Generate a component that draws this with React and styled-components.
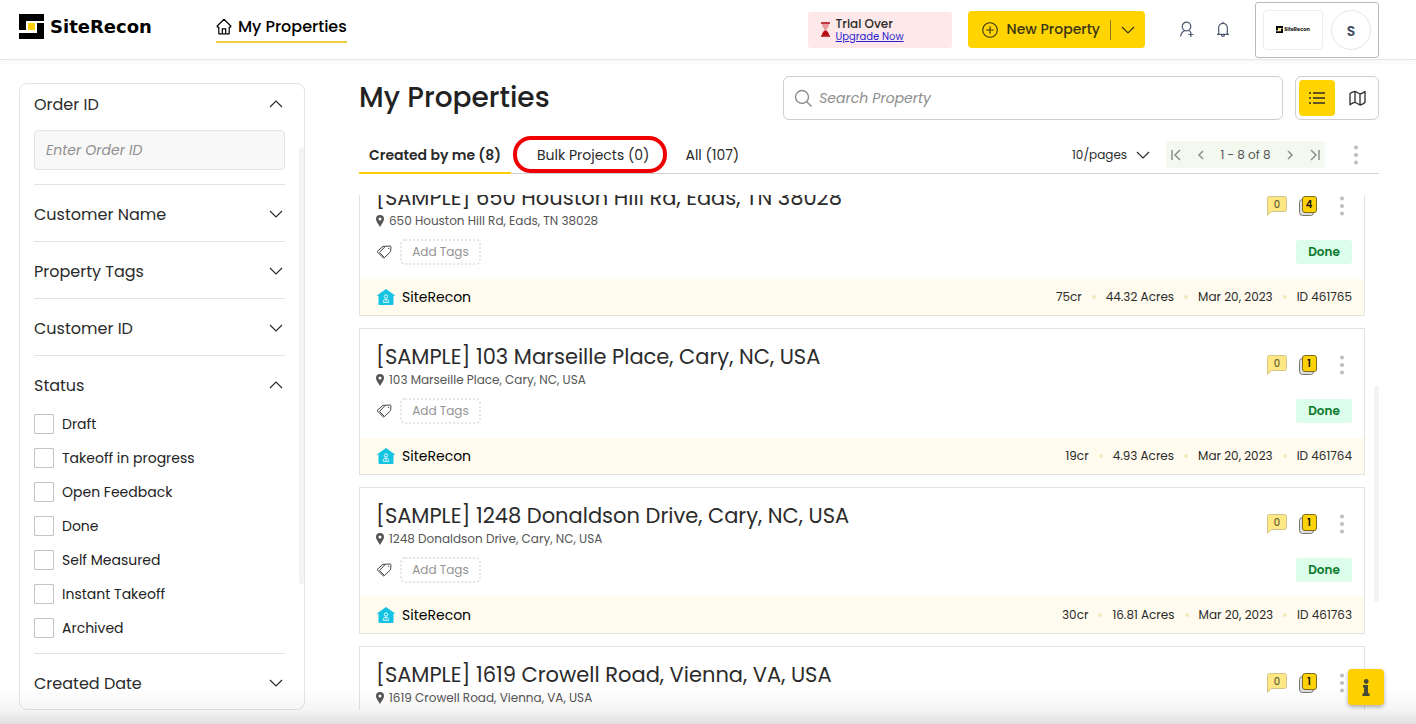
import { useState } from "react";
import styled, { createGlobalStyle } from "styled-components";

const GlobalStyle = createGlobalStyle`
  * {
    box-sizing: border-box;
  }

  body {
    margin: 0;
    background: #fff;
    color: #2b2b2b;
    font-family: Poppins, Inter, "Open Sans", sans-serif;
    font-size: 14px;
  }

  button, input, select {
    font-family: inherit;
    color: inherit;
  }

  button {
    border: none;
    padding: 0;
    background: none;
    cursor: pointer;
  }

  svg {
    display: block;
    flex-shrink: 0;
  }
`;

const Page = styled.div`
  display: flex;
  flex-direction: column;
  height: 100vh;
  overflow: hidden;
`;

/* header */

const Header = styled.header`
  display: flex;
  align-items: center;
  height: 60px;
  flex-shrink: 0;
  padding: 0 37px 0 19px;
  border-bottom: 1px solid #e6e6e6;
  box-shadow: 0 2px 6px rgba(0, 0, 0, 0.04);
`;

const Brand = styled.a`
  display: flex;
  align-items: center;
  gap: 6px;
  margin-bottom: 6px;
  color: #000;
  text-decoration: none;
  font-family: "DejaVu Sans", sans-serif;
  font-weight: 700;
  font-size: 18px;
`;

const NavLink = styled.a`
  display: flex;
  align-items: center;
  gap: 6px;
  height: 30px;
  margin: 0 0 4px 64px;
  border-bottom: 2px solid #edd03c;
  color: #000;
  text-decoration: none;
  font-weight: 500;
  font-size: 16px;
`;

const HeaderRight = styled.div`
  display: flex;
  align-items: center;
  margin-left: auto;
`;

const TrialBox = styled.div`
  display: flex;
  align-items: center;
  gap: 5px;
  width: 144px;
  height: 36px;
  padding-left: 12px;
  border-radius: 3px;
  background: #ffe8e9;
`;

const TrialText = styled.div`
  display: flex;
  flex-direction: column;
  font-size: 12px;
  font-weight: 500;
  line-height: 14px;

  a {
    color: #2a1fd0;
    font-size: 10px;
    font-weight: 400;
    line-height: 12px;
  }
`;

const NewButtonGroup = styled.div`
  display: flex;
  align-items: center;
  height: 37px;
  margin: 0 33px 0 16px;
  border-radius: 4px;
  background: #ffd400;
  color: #3b3413;
`;

const NewButton = styled.button`
  display: flex;
  align-items: center;
  gap: 9px;
  height: 20px;
  padding: 0 10px 0 14px;
  border-right: 1px solid #8d7714;
  font-size: 14px;
  font-weight: 500;
`;

const NewMenuButton = styled.button`
  display: flex;
  align-items: center;
  justify-content: center;
  width: 34px;
  height: 37px;
`;

const HeaderIcon = styled.button`
  display: flex;
  align-items: center;
  justify-content: center;
  width: 18px;
  height: 20px;
  margin-right: 18px;
  color: #4a5670;
`;

const Account = styled.button`
  display: flex;
  align-items: center;
  gap: 8px;
  height: 56px;
  margin-left: 5px;
  padding: 0 7px;
  border: 1px solid #b9b9b9;
  border-radius: 3px;
`;

const CompanyLogo = styled.span`
  display: flex;
  align-items: center;
  justify-content: center;
  gap: 1px;
  width: 60px;
  height: 40px;
  border: 1px solid #ececec;
  border-radius: 4px;
  font-size: 5px;
  font-weight: 700;
  color: #222;
`;

const Avatar = styled.span`
  display: flex;
  align-items: center;
  justify-content: center;
  width: 40px;
  height: 40px;
  padding-top: 4px;
  border: 1px solid #e6e6e6;
  border-radius: 50%;
  color: #3d4a5e;
  font-size: 14px;
  font-weight: 600;
`;

/* body */

const Main = styled.main`
  display: flex;
  gap: 54px;
  flex: 1;
  min-height: 0;
  padding: 16px 37px 14px 19px;
`;

const Sidebar = styled.aside`
  position: relative;
  width: 286px;
  flex-shrink: 0;
  margin-top: 7px;
  padding: 0 19px 0 14px;
  border: 1px solid #e4e4e4;
  border-radius: 8px;
  overflow: hidden;
`;

const ScrollThumb = styled.span`
  position: absolute;
  top: ${(props) => props.$top};
  right: 0;
  width: 5px;
  height: ${(props) => props.$size};
  border-radius: 3px;
  background: #f3f3f3;
`;

const FilterSection = styled.section`
  padding: 9px 0 7px;
  border-bottom: 1px solid #e2e2e2;

  &:first-child {
    padding-top: 0;
  }

  &:last-of-type {
    border-bottom: none;
  }
`;

const FilterHeader = styled.button`
  display: flex;
  align-items: center;
  justify-content: space-between;
  width: 100%;
  height: 40px;
  padding-right: 2px;
  font-size: 16px;
`;

const OrderInput = styled.input`
  display: block;
  width: 100%;
  height: 40px;
  margin: 6px 0 7px;
  padding: 0 11px;
  border: 1px solid #e2e2e2;
  border-radius: 4px;
  background: #f8f8f8;
  font-size: 14px;
  font-style: italic;

  &::placeholder {
    color: #909090;
  }
`;

const CheckList = styled.div`
  padding: 2px 0 1px;
`;

const CheckRow = styled.label`
  display: flex;
  align-items: center;
  gap: 8px;
  height: 34px;
  color: #222;
  font-size: 14px;

  input {
    appearance: none;
    width: 20px;
    height: 20px;
    margin: 0;
    border: 1px solid #c4c4c4;
    border-radius: 1px;
    background: #fff;
  }

  input:checked {
    background: #ffd400;
  }
`;

const Content = styled.div`
  display: flex;
  flex-direction: column;
  flex: 1;
  min-width: 0;
`;

const TitleRow = styled.div`
  display: flex;
  align-items: center;
  gap: 12px;
  height: 44px;
`;

const PageTitle = styled.h1`
  flex: 1;
  margin: 0;
  color: #222;
  font-size: 28px;
  font-weight: 500;
  line-height: 36px;
`;

const SearchBox = styled.label`
  display: flex;
  align-items: center;
  gap: 6px;
  width: 49%;
  height: 44px;
  padding: 0 10px;
  border: 1px solid #cfcfcf;
  border-radius: 6px;
  color: #8d8d8d;

  input {
    flex: 1;
    border: none;
    outline: none;
    padding: 0;
    background: none;
    font-size: 14px;
    font-style: italic;
  }

  input::placeholder {
    color: #8d8d8d;
  }
`;

const ViewToggle = styled.div`
  display: flex;
  align-items: center;
  gap: 4px;
  height: 44px;
  padding: 0 3px;
  border: 1px solid #cfcfcf;
  border-radius: 6px;
`;

const ViewButton = styled.button`
  display: flex;
  align-items: center;
  justify-content: center;
  width: 36px;
  height: 36px;
  border-radius: 4px;
  background: ${(props) => (props.$active ? "#ffd400" : "transparent")};
`;

const TabRow = styled.div`
  display: flex;
  align-items: center;
  height: 38px;
  flex-shrink: 0;
  margin-top: 16px;
  border-bottom: 1px solid #d2d2d2;
`;

const Tab = styled.button`
  position: relative;
  height: 38px;
  margin-right: 16px;
  padding: 4px 10px 0;
  border-bottom: 2px solid ${(props) => (props.$active ? "#ffc907" : "transparent")};
  font-size: 14px;
  font-weight: ${(props) => (props.$active ? 600 : 400)};
  white-space: nowrap;
`;

const Highlight = styled.span`
  position: absolute;
  inset: 0 -8px -1px -14px;
  border: 4px solid #f00000;
  border-radius: 18px;
`;

const TabTools = styled.div`
  display: flex;
  align-items: center;
  margin-left: auto;
  padding-right: 13px;
`;

const PageSize = styled.label`
  display: flex;
  align-items: center;
  gap: 8px;
  margin-right: 16px;

  select {
    appearance: none;
    border: none;
    padding: 0;
    background: none;
    font-size: 12px;
  }
`;

const Pager = styled.div`
  display: flex;
  align-items: center;
  justify-content: space-between;
  width: 159px;
  height: 27px;
  margin-right: 21px;
  padding: 0 4px;
  border-radius: 3px;
  background: #f3f9ef;
  color: #555;
  font-size: 12px;

  button {
    color: #8d8d8d;
  }
`;

const MenuButton = styled.button`
  display: flex;
  align-items: center;
  justify-content: center;
  width: 20px;
  height: 24px;
  color: #bdbdbd;
`;

const ListArea = styled.div`
  position: relative;
  flex: 1;
  min-height: 0;
  margin-top: 21px;
  padding-right: 14px;
  overflow: hidden;
`;

const CardList = styled.div`
  display: flex;
  flex-direction: column;
  gap: 12px;
  margin-top: -26px;
`;

const Card = styled.article`
  border: 1px solid #e3e3e3;
`;

const CardBody = styled.div`
  display: flex;
  flex-direction: column;
  gap: 10px;
  padding: 13px 12px 14px 16px;
`;

const CardRow = styled.div`
  display: flex;
  align-items: center;
  justify-content: space-between;
`;

const CardTitle = styled.h2`
  margin: 0;
  font-size: 21px;
  font-weight: 400;
  line-height: 30px;
`;

const Address = styled.div`
  display: flex;
  align-items: center;
  gap: 5px;
  color: #555;
  font-size: 12px;
  line-height: 16px;
`;

const Actions = styled.div`
  display: flex;
  align-items: center;
  gap: 12px;

  ${MenuButton} {
    margin-left: 3px;
  }
`;

const CountButton = styled.button`
  position: relative;
  height: 20px;
`;

const Count = styled.span`
  position: absolute;
  top: 0;
  right: 0;
  width: ${(props) => (props.$strong ? "16px" : "20px")};
  color: ${(props) => (props.$strong ? "#111" : "#6d6536")};
  font-size: 10px;
  font-weight: ${(props) => (props.$strong ? 600 : 500)};
  line-height: 17px;
  text-align: center;
`;

const Tags = styled.div`
  display: flex;
  align-items: center;
  gap: 8px;
`;

const AddTags = styled.button`
  width: 81px;
  height: 26px;
  border: 2px dotted #e4e4e4;
  border-radius: 5px;
  color: #929292;
  font-size: 12px;
`;

const StatusBadge = styled.span`
  width: 56px;
  border-radius: 3px;
  background: #dcfde9;
  color: #087a2c;
  font-size: 12px;
  font-weight: 600;
  line-height: 24px;
  text-align: center;
`;

const CardFooter = styled.footer`
  display: flex;
  align-items: center;
  justify-content: space-between;
  height: 36px;
  padding: 0 12px 0 16px;
  background: #fffbee;
`;

const Owner = styled.div`
  display: flex;
  align-items: center;
  gap: 6px;
  color: #000;
  font-size: 14px;
`;

const Meta = styled.div`
  display: flex;
  align-items: center;
  gap: 10px;
  font-size: 12px;
`;

const Dot = styled.span`
  width: 4px;
  height: 4px;
  border-radius: 50%;
  background: #f0eabc;
`;

const BottomFade = styled.div`
  position: fixed;
  left: 0;
  right: 0;
  bottom: 0;
  height: 36px;
  background: linear-gradient(rgba(0, 0, 0, 0), rgba(0, 0, 0, 0.04) 60%, rgba(0, 0, 0, 0.12));
  pointer-events: none;
`;

const InfoButton = styled.button`
  position: fixed;
  right: 32px;
  bottom: 19px;
  display: flex;
  align-items: center;
  justify-content: center;
  width: 36px;
  height: 36px;
  border-radius: 4px;
  background: #ffd000;
  box-shadow: 0 2px 4px rgba(0, 0, 0, 0.3);
`;

/* icons */

const Chevron = ({ up, size = 14 }) => (
  <svg width={size} height={size} viewBox="0 0 14 14" fill="none" stroke="currentColor" strokeWidth="1.2">
    <path d={up ? "M1 10l6-6 6 6" : "M1 4l6 6 6-6"} />
  </svg>
);

const LogoMark = ({ size }) => (
  <svg width={size} height={size} viewBox="0 0 25 25">
    <path d="M0 0h25v7H7v9H0z" fill="#000" />
    <path d="M25 25H0v-6h18V9h7z" fill="#000" />
    <path d="M9 9h7v7H9z" fill="#ffcf0b" />
  </svg>
);

const HouseIcon = () => (
  <svg width="16" height="17" viewBox="0 0 16 17" fill="none" stroke="currentColor" strokeWidth="1.2">
    <path d="M1 8.2L8 1.3l7 6.9-.7.9h-1.1v6.7H2.8V9.1H1.700z" strokeLinejoin="round" />
    <path d="M6.300 15.600v-4.800h3.400v4.800" />
  </svg>
);

const HourglassIcon = () => (
  <svg width="11" height="15" viewBox="0 0 11 15">
    <path d="M2 1.5h7c0 3-1.2 4.4-2.7 6C7.800 9 9 10.500 9 13.500H2c0-3 1.200-4.500 2.700-6C3.200 6 2 4.500 2 1.500z" fill="#e99a9c" />
    <path d="M5.500 8.500C7.500 9.500 9 11 9 13.500H2c0-2.500 1.500-4 3.500-5z" fill="#b40610" />
    <path d="M1 1h9M1 14h9" stroke="#b40610" strokeWidth="1.500" />
  </svg>
);

const PlusCircleIcon = () => (
  <svg width="16" height="16" viewBox="0 0 16 16" fill="none" stroke="currentColor" strokeWidth="1.100">
    <circle cx="8" cy="8" r="7.300" />
    <path d="M8 4.200v7.600M4.200 8h7.600" />
  </svg>
);

const UserPlusIcon = () => (
  <svg width="16" height="17" viewBox="0 0 16 17" fill="none" stroke="currentColor" strokeWidth="1.200">
    <circle cx="7.500" cy="5.500" r="4.300" />
    <path d="M1.700 15.500c.3-3.300 1.800-5 4-5.900M9.700 9.500c.8.400 1.400.9 1.900 1.600M11.800 11v5M9.300 13.500h5" />
  </svg>
);

const BellIcon = () => (
  <svg width="14" height="17" viewBox="0 0 14 17" fill="none" stroke="currentColor" strokeWidth="1.200">
    <path d="M1 13.300h12M2.700 13V6.700a4.300 4.300 0 0 1 8.600 0V13M5.500 13.500c0 2.600 3 2.600 3 0M7 .7v1.700" />
  </svg>
);

const SearchIcon = () => (
  <svg width="19" height="19" viewBox="0 0 19 19" fill="none" stroke="currentColor" strokeWidth="1.400">
    <circle cx="8" cy="8" r="6.500" />
    <path d="M12.700 12.700l4.800 4.800" />
  </svg>
);

const ListIcon = () => (
  <svg width="16" height="14" viewBox="0 0 16 14" stroke="#2b2b2b" strokeWidth="1.500">
    <path d="M0 2h2M0 7h2M0 12h2M4 2h12M4 7h12M4 12h12" />
  </svg>
);

const MapIcon = () => (
  <svg width="17" height="16" viewBox="0 0 17 16" fill="none" stroke="#2b2b2b" strokeWidth="1.300" strokeLinejoin="round">
    <path d="M1 3.500c1.700-1.300 3.300-2 5-2.200l5 2.700c1.700-.2 3.300-1 5-2.500v11c-1.700 1.500-3.300 2.300-5 2.500l-5-2.700c-1.700.2-3.300 1-5 2.500zM6 1.300v11M11 4v11" />
  </svg>
);

const PagerIcon = ({ d }) => (
  <svg width="12" height="12" viewBox="0 0 12 12" fill="none" stroke="currentColor" strokeWidth="1.500">
    <path d={d} />
  </svg>
);

const DotsIcon = () => (
  <svg width="4" height="20" viewBox="0 0 4 20" fill="currentColor">
    <circle cx="2" cy="2.500" r="2" />
    <circle cx="2" cy="10" r="2" />
    <circle cx="2" cy="17.500" r="2" />
  </svg>
);

const PinIcon = () => (
  <svg width="8" height="12" viewBox="0 0 8 12">
    <path fillRule="evenodd" fill="#555" d="M4 0a4 4 0 0 1 4 4c0 2.200-1.500 3.700-4 8C1.500 7.700 0 6.200 0 4a4 4 0 0 1 4-4zm0 2.500a1.500 1.500 0 1 0 0 3 1.500 1.500 0 0 0 0-3z" />
  </svg>
);

const TagIcon = () => (
  <svg width="16" height="14" viewBox="0 0 16 14" fill="none" stroke="#444" strokeWidth="1" strokeLinejoin="round">
    <path d="M9.300 1.300l5-.3.700.6-.4 5-6.100 5.900-5-5z" />
    <path d="M8.500 12.500l-1.200.4L1 6.700l6-5.400 2.300 0" />
    <circle cx="12.600" cy="3.400" r=".6" fill="#444" stroke="none" />
  </svg>
);

const OwnerIcon = () => (
  <svg width="20" height="16" viewBox="0 0 20 16">
    <path d="M10 0l9.500 6.800H17.500V15a1 1 0 0 1-1 1h-13a1 1 0 0 1-1-1V6.800H.5z" fill="#14c3e2" />
    <g fill="none" stroke="#d9f8fd" strokeWidth="1">
      <circle cx="10" cy="7.500" r="1.700" />
      <path d="M7.300 13.300v-1c0-3 5.400-3 5.400 0v1zM10 10.500v2" />
    </g>
  </svg>
);

const CommentIcon = () => (
  <svg width="20" height="20" viewBox="0 0 20 20">
    <path d="M2.500.5h15a2 2 0 0 1 2 2v11a2 2 0 0 1-2 2H4.500L.5 19.300V2.500a2 2 0 0 1 2-2z" fill="#ffe784" stroke="#d2c48a" />
  </svg>
);

const CopiesIcon = () => (
  <svg width="18" height="20" viewBox="0 0 18 20" stroke="#77746a">
    <rect x=".5" y="3.500" width="14" height="16" rx="3" fill="#dedede" />
    <rect x="3.500" y=".5" width="14" height="16" rx="2.500" fill="#ffd205" stroke="#7d6c1c" />
  </svg>
);

const InfoIcon = () => (
  <svg width="8" height="17" viewBox="0 0 8 17" fill="#454b36">
    <circle cx="4.200" cy="2.500" r="2.400" />
    <path d="M1 6h5v8.300h1.500V17H.5v-2.700H2V8.600H1z" />
  </svg>
);

const statuses = [
  "Draft",
  "Takeoff in progress",
  "Open Feedback",
  "Done",
  "Self Measured",
  "Instant Takeoff",
  "Archived",
];

const properties = [
  { id: 461765, address: "650 Houston Hill Rd, Eads, TN 38028", copies: 4, credits: "75cr", area: "44.32 Acres" },
  { id: 461764, address: "103 Marseille Place, Cary, NC, USA", copies: 1, credits: "19cr", area: "4.93 Acres" },
  { id: 461763, address: "1248 Donaldson Drive, Cary, NC, USA", copies: 1, credits: "30cr", area: "16.81 Acres" },
  { id: 461762, address: "1619 Crowell Road, Vienna, VA, USA", copies: 1 },
];

function Filter({ title, defaultOpen = false, children }) {
  const [open, setOpen] = useState(defaultOpen);

  return (
    <FilterSection>
      <FilterHeader aria-expanded={open} onClick={() => setOpen(!open)}>
        {title}
        <Chevron up={open} />
      </FilterHeader>
      {open && children}
    </FilterSection>
  );
}

function PropertyCard({ property }) {
  return (
    <Card>
      <CardBody>
        <CardRow>
          <div>
            <CardTitle>[SAMPLE] {property.address}</CardTitle>
            <Address>
              <PinIcon />
              {property.address}
            </Address>
          </div>
          <Actions>
            <CountButton aria-label="Comments">
              <CommentIcon />
              <Count>0</Count>
            </CountButton>
            <CountButton aria-label="Copies">
              <CopiesIcon />
              <Count $strong>{property.copies}</Count>
            </CountButton>
            <MenuButton aria-label="Property menu">
              <DotsIcon />
            </MenuButton>
          </Actions>
        </CardRow>
        <CardRow>
          <Tags>
            <TagIcon />
            <AddTags>Add Tags</AddTags>
          </Tags>
          <StatusBadge>Done</StatusBadge>
        </CardRow>
      </CardBody>
      {property.credits && (
        <CardFooter>
          <Owner>
            <OwnerIcon />
            SiteRecon
          </Owner>
          <Meta>
            <span>{property.credits}</span>
            <Dot />
            <span>{property.area}</span>
            <Dot />
            <span>Mar 20, 2023</span>
            <Dot />
            <span>ID {property.id}</span>
          </Meta>
        </CardFooter>
      )}
    </Card>
  );
}

function App() {
  const [tab, setTab] = useState("created");
  const [view, setView] = useState("list");

  return (
    <Page>
      <GlobalStyle />
      <Header>
        <Brand href="#">
          <LogoMark size={25} />
          SiteRecon
        </Brand>
        <NavLink href="#">
          <HouseIcon />
          My Properties
        </NavLink>
        <HeaderRight>
          <TrialBox>
            <HourglassIcon />
            <TrialText>
              Trial Over
              <a href="#">Upgrade Now</a>
            </TrialText>
          </TrialBox>
          <NewButtonGroup>
            <NewButton>
              <PlusCircleIcon />
              New Property
            </NewButton>
            <NewMenuButton aria-label="More options">
              <Chevron />
            </NewMenuButton>
          </NewButtonGroup>
          <HeaderIcon aria-label="Invite user">
            <UserPlusIcon />
          </HeaderIcon>
          <HeaderIcon aria-label="Notifications">
            <BellIcon />
          </HeaderIcon>
          <Account>
            <CompanyLogo>
              <LogoMark size={7} />
              SiteRecon
            </CompanyLogo>
            <Avatar>S</Avatar>
          </Account>
        </HeaderRight>
      </Header>

      <Main>
        <Sidebar>
          <Filter title="Order ID" defaultOpen>
            <OrderInput aria-label="Order ID" placeholder="Enter Order ID" />
          </Filter>
          <Filter title="Customer Name" />
          <Filter title="Property Tags" />
          <Filter title="Customer ID" />
          <Filter title="Status" defaultOpen>
            <CheckList>
              {statuses.map((status) => (
                <CheckRow key={status}>
                  <input type="checkbox" />
                  {status}
                </CheckRow>
              ))}
            </CheckList>
          </Filter>
          <Filter title="Created Date" />
          <ScrollThumb $top="10%" $size="70%" />
        </Sidebar>

        <Content>
          <TitleRow>
            <PageTitle>My Properties</PageTitle>
            <SearchBox>
              <SearchIcon />
              <input aria-label="Search Property" placeholder="Search Property" />
            </SearchBox>
            <ViewToggle>
              <ViewButton $active={view === "list"} onClick={() => setView("list")} aria-label="List view">
                <ListIcon />
              </ViewButton>
              <ViewButton $active={view === "map"} onClick={() => setView("map")} aria-label="Map view">
                <MapIcon />
              </ViewButton>
            </ViewToggle>
          </TitleRow>

          <TabRow>
            <Tab $active={tab === "created"} onClick={() => setTab("created")}>
              Created by me (8)
            </Tab>
            <Tab $active={tab === "bulk"} onClick={() => setTab("bulk")}>
              Bulk Projects (0)
              <Highlight />
            </Tab>
            <Tab $active={tab === "all"} onClick={() => setTab("all")}>
              All (107)
            </Tab>
            <TabTools>
              <PageSize>
                <select aria-label="Page size">
                  <option>10/pages</option>
                </select>
                <Chevron />
              </PageSize>
              <Pager>
                <button aria-label="First page">
                  <PagerIcon d="M2 1v10M10 1L5 6l5 5" />
                </button>
                <button aria-label="Previous page">
                  <PagerIcon d="M8 2L4 6l4 4" />
                </button>
                <span>1 - 8 of 8</span>
                <button aria-label="Next page">
                  <PagerIcon d="M4 2l4 4-4 4" />
                </button>
                <button aria-label="Last page">
                  <PagerIcon d="M10 1v10M2 1l5 5-5 5" />
                </button>
              </Pager>
              <MenuButton aria-label="List menu">
                <DotsIcon />
              </MenuButton>
            </TabTools>
          </TabRow>

          <ListArea>
            <CardList>
              {properties.map((property) => (
                <PropertyCard key={property.id} property={property} />
              ))}
            </CardList>
            <ScrollThumb $top="37%" $size="42%" />
          </ListArea>
        </Content>
      </Main>

      <BottomFade />
      <InfoButton aria-label="Help">
        <InfoIcon />
      </InfoButton>
    </Page>
  );
}

export default App;
